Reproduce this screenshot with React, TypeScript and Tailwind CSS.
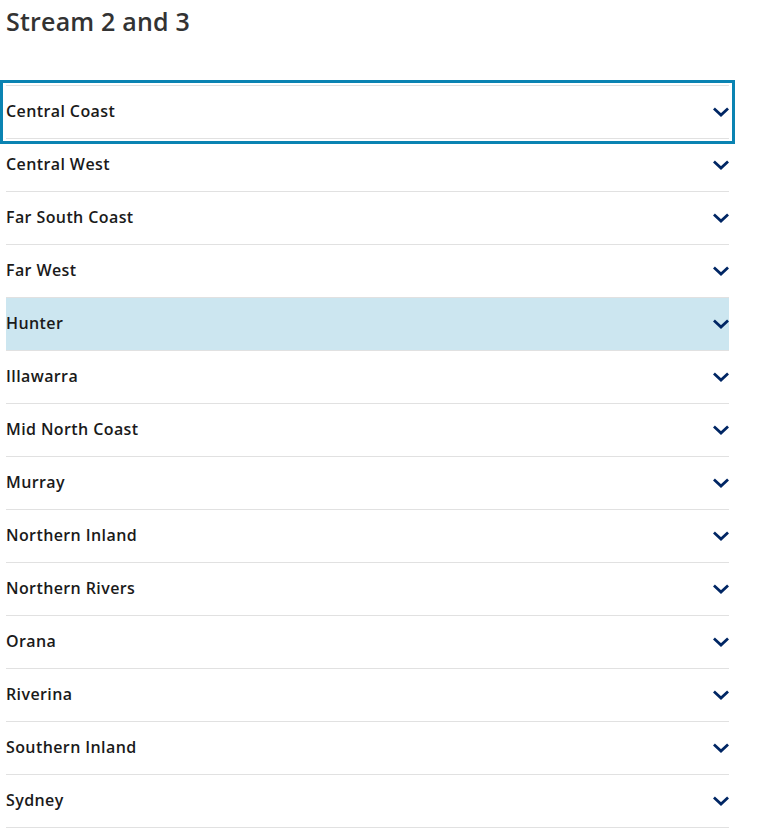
import * as React from 'react'

const regions = [
  'Central Coast',
  'Central West',
  'Far South Coast',
  'Far West',
  'Hunter',
  'Illawarra',
  'Mid North Coast',
  'Murray',
  'Northern Inland',
  'Northern Rivers',
  'Orana',
  'Riverina',
  'Southern Inland',
  'Sydney',
]

function Chevron() {
  return (
    <svg width="16" height="10" viewBox="0 0 16 10" className="shrink-0">
      <path d="M2 2.5 L8 8 L14 2.5" fill="none" stroke="#002664" strokeWidth="2.8" strokeLinecap="square" />
    </svg>
  )
}

export default function App() {
  return (
    <div className="min-h-[830px] bg-white pl-[6px] pt-[5px]" style={{fontFamily: '"Open Sans", "Liberation Sans", sans-serif'}}>
      <h2 className="text-[25px] leading-[32px] font-semibold tracking-[0.2px] text-[#333]">Stream 2 and 3</h2>
      <ul className="mt-[48px] w-[723px] border-t border-[#e1e1e1]">
        {regions.map((name, i) => (
          <li key={name} className="border-b border-[#e1e1e1]">
            <button
              className={
                'flex h-[52px] w-full items-center justify-between text-left text-[16px] font-semibold tracking-[0.4px] text-[#1a1a1a] ' +
                (name === 'Hunter' ? 'bg-[#cce6f0] ' : '') +
                (i === 0 ? 'outline-3 outline-solid outline-offset-[3px] outline-[#0a83b2]' : '')
              }
            >
              <span className="pb-[2px]">{name}</span>
              <Chevron />
            </button>
          </li>
        ))}
      </ul>
    </div>
  )
}
